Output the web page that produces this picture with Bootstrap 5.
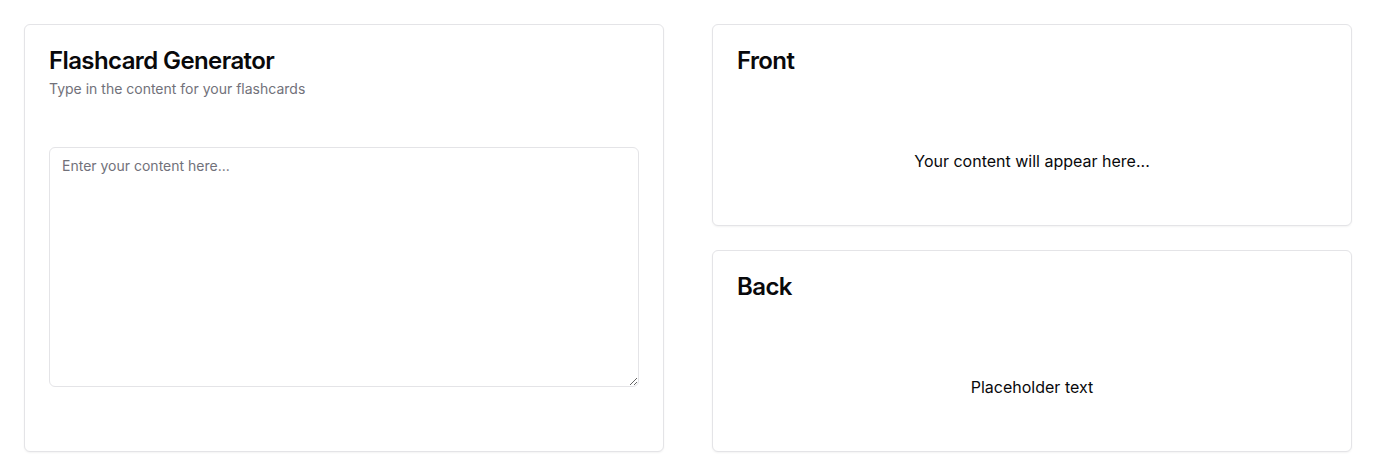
<!DOCTYPE html>
<html lang="en">
<head>
<meta charset="utf-8">
<meta name="viewport" content="width=device-width, initial-scale=1">
<title>Flashcard Generator</title>
<link href="https://cdn.jsdelivr.net/npm/bootstrap@5.3.0/dist/css/bootstrap.min.css" rel="stylesheet">
<style>
  :root { --line: #e4e4e7; --ink: #09090b; --muted: #71717a; }
  body { font-family: Inter, "Liberation Sans", sans-serif; color: var(--ink); background: #fff; line-height: 24px; }
  .panel { border-color: var(--line); border-radius: 6px; color: var(--ink); box-shadow: 0 1px 2px rgba(0, 0, 0, .05); }
  .panel-head { display: flex; flex-direction: column; gap: 6px; }
  .panel-title { font-size: 24px; line-height: 24px; font-weight: 600; letter-spacing: -0.025em; }
  .panel-note { font-size: 14px; line-height: 20px; color: var(--muted); }
  .content-box { height: 240px; font-size: 14px; line-height: 20px; padding: 8px 12px; border-color: var(--line); border-radius: 6px; color: var(--ink); }
  .content-box::placeholder { color: var(--muted); }
  .face { min-height: 128px; }
</style>
</head>
<body>
<main class="container-fluid p-4">
  <div class="row gx-5 gy-4">
    <div class="col-md-6">
      <section class="card panel h-100">
        <header class="panel-head p-4">
          <h1 class="panel-title mb-0"><label for="content">Flashcard Generator</label></h1>
          <p class="panel-note mb-0">Type in the content for your flashcards</p>
        </header>
        <div class="p-4">
          <textarea id="content" class="form-control content-box" placeholder="Enter your content here..."></textarea>
        </div>
      </section>
    </div>
    <div class="col-md-6 d-flex flex-column gap-4">
      <section class="card panel">
        <header class="panel-head p-4"><h2 class="panel-title mb-0">Front</h2></header>
        <div class="face d-flex align-items-center justify-content-center p-4"><p class="mb-0">Your content will appear here...</p></div>
      </section>
      <section class="card panel">
        <header class="panel-head p-4"><h2 class="panel-title mb-0">Back</h2></header>
        <div class="face d-flex align-items-center justify-content-center p-4"><p class="mb-0">Placeholder text</p></div>
      </section>
    </div>
  </div>
</main>
<script src="https://cdn.jsdelivr.net/npm/bootstrap@5.3.0/dist/js/bootstrap.bundle.min.js"></script>
</body>
</html>
